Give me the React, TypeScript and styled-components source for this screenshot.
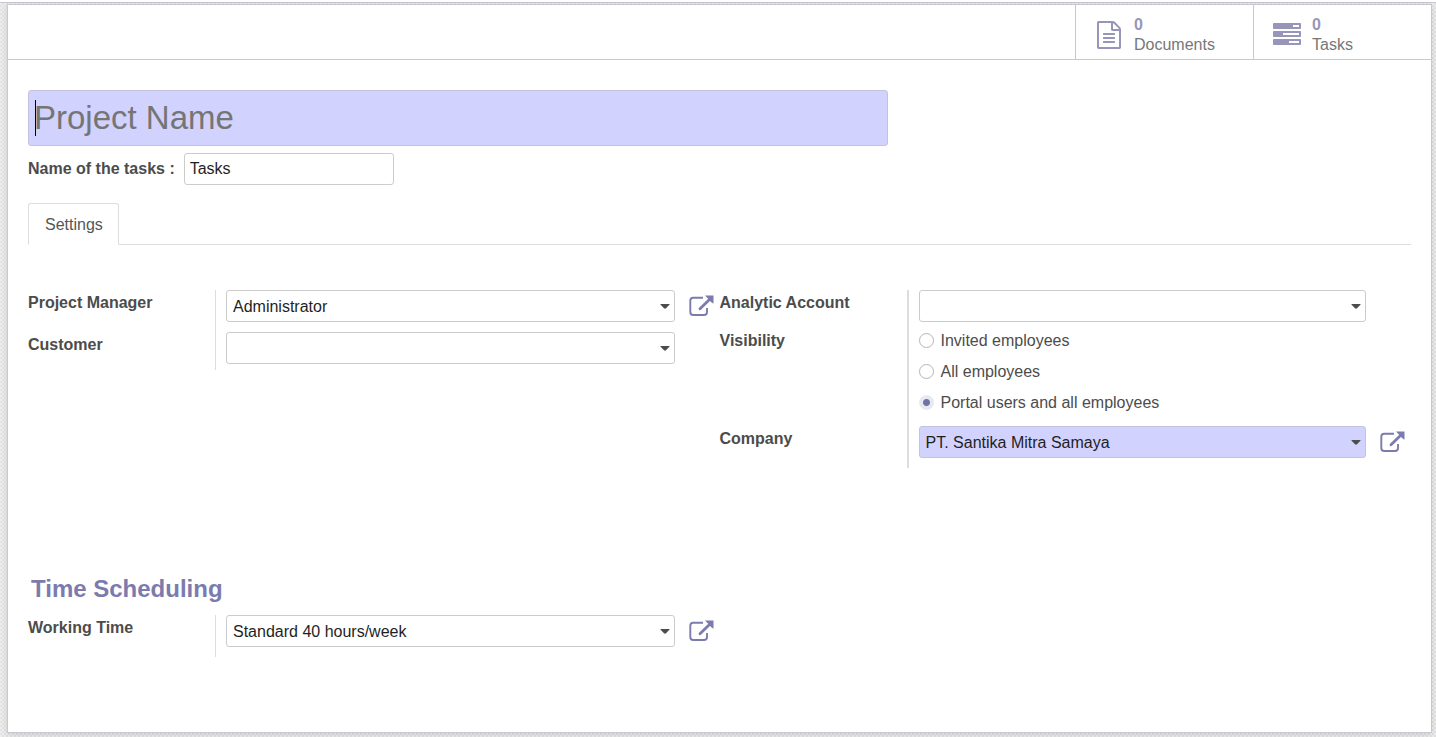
import React, { useId, useState } from 'react';
import styled, { createGlobalStyle } from 'styled-components';

const GlobalStyle = createGlobalStyle`
  *, *::before, *::after { box-sizing: border-box; }
  body {
    margin: 0;
    background: #fff;
    color: #4c4c4c;
    font: 16px/26px "Liberation Sans", Arial, sans-serif;
  }
`;

const Page = styled.main`
  display: flex;
  min-height: calc(100vh - 2px);
  margin-top: 2px;
  padding: 1px 4px 4px 7px;
  border-top: 1px solid #c8c8d3;
  background: repeating-conic-gradient(#e2e2e2 0 25%, #eeeeee 0 50%) 0 0 / 4px 4px;
`;

const Sheet = styled.form`
  flex: 1;
  min-width: 0;
  border: 1px solid #c8c8d3;
  background: #fff;
  box-shadow: 0 2px 6px rgba(0, 0, 0, 0.12);
`;

const StatBar = styled.header`
  display: flex;
  justify-content: flex-end;
  height: 55px;
  border-bottom: 1px solid #c8c8d3;
`;

const StatButton = styled.button`
  display: flex;
  align-items: center;
  gap: 11px;
  width: 178px;
  padding: 5px 0 0 19px;
  border: 0;
  border-left: 1px solid #c8c8d3;
  background: #fff;
  color: #777;
  font: inherit;
  line-height: 20px;
  text-align: left;
  cursor: pointer;
`;

const StatText = styled.span`
  display: flex;
  flex-direction: column;
`;

const StatValue = styled.strong`
  color: #9796ba;
`;

const StatSvg = styled.svg`
  width: 28px;
  height: 28px;
  fill: #9796ba;
`;

const Content = styled.div`
  padding: 30px 20px 75px;
`;

const TitleBox = styled.div`
  position: relative;
  max-width: 860px;
`;

const TextCursor = styled.span`
  position: absolute;
  top: 10px;
  left: 7px;
  width: 1px;
  height: 36px;
  background: #000;
`;

const TextInput = styled.input`
  width: 210px;
  height: 32px;
  padding: 0 5px;
  border: 1px solid #ccc;
  border-radius: 3px;
  background: #fff;
  color: #1f1f1f;
  font: inherit;
`;

const TitleInput = styled(TextInput)`
  display: block;
  width: 100%;
  height: 56px;
  border-color: #c3c3dd;
  background: #d2d2ff;
  font-size: 33px;

  &::placeholder { color: #757575; opacity: 1; }
`;

const TaskNameRow = styled.div`
  display: flex;
  align-items: center;
  gap: 9px;
  margin-top: 7px;
`;

const Label = styled.label`
  font-weight: bold;
`;

const TabList = styled.div`
  display: flex;
  margin-top: 18px;
  border-bottom: 1px solid #ddd;
`;

const Tab = styled.button`
  height: 42px;
  margin-bottom: -1px;
  padding: 2px 15px 0 16px;
  border: 1px solid #ddd;
  border-bottom-color: #fff;
  border-radius: 3px 3px 0 0;
  background: #fff;
  color: #555;
  font: inherit;
`;

const Columns = styled.div`
  display: grid;
  grid-template-columns: 1fr 1fr;
  align-items: start;
`;

const SettingsColumns = styled(Columns)`
  margin-top: 45px;
`;

const Row = styled.div<{ $space: number; $line: number }>`
  display: grid;
  grid-template-columns: 187px 1fr;

  & > :last-child {
    padding: 0 6px ${(p) => p.$space}px 10px;
    border-left: ${(p) => p.$line}px solid #ddd;
  }
`;

const Cell = styled.div`
  display: grid;
  grid-template-columns: 1fr 25px;
  align-items: center;
  gap: 14px;
`;

const SelectBox = styled.div`
  display: grid;
  align-items: center;

  & > * { grid-area: 1 / 1; }
`;

const Select = styled.select<{ $required?: boolean }>`
  appearance: none;
  width: 100%;
  height: 32px;
  padding: 2px 24px 0 6px;
  border: 1px solid ${(p) => (p.$required ? '#c3c3dd' : '#ccc')};
  border-radius: 3px;
  background: ${(p) => (p.$required ? '#d2d2ff' : '#fff')};
  color: #1f1f1f;
  font: inherit;
`;

const Caret = styled.svg`
  justify-self: end;
  width: 10px;
  height: 5px;
  margin-right: 5px;
  fill: #4c4c4c;
  pointer-events: none;
`;

const LinkButton = styled.button`
  width: 25px;
  height: 22px;
  padding: 0;
  border: 0;
  background: none;
  color: #7c7bad;
  cursor: pointer;

  svg { display: block; }
`;

const Choices = styled.div`
  display: flex;
  flex-direction: column;
  gap: 5px;
`;

const Choice = styled.label`
  display: flex;
  align-items: center;
  gap: 7px;
`;

const Radio = styled.input`
  appearance: none;
  width: 15px;
  height: 15px;
  margin: 0 0 2px;
  border: 1px solid #b4b4bc;
  border-radius: 50%;
  background: #fff;

  &:checked {
    border-color: #e8e8f2;
    background: radial-gradient(circle, #7073a3 0 3px, #e8e8f2 4px);
  }
`;

const GroupTitle = styled.h2`
  margin: 106px 0 11px 3px;
  color: #7c7bad;
  font-size: 24px;
  line-height: 30px;
`;

function ExternalLink({ title }: { title: string }) {
  return (
    <LinkButton type="button" aria-label={title}>
      <svg width="25" height="22" viewBox="0 0 25 22" fill="none">
        <path
          d="M14 2.7H4.2Q1.3 2.7 1.3 5.6V17Q1.3 20 4.2 20H15Q18 20 18 17V13"
          stroke="currentColor"
          strokeWidth="1.9"
        />
        <path d="M11 13.8L20.5 4.5" stroke="currentColor" strokeWidth="2.8" strokeLinecap="round" />
        <path d="M16 .5H24.5V8.8L22 6.9L18.2 2.8Z" fill="currentColor" />
      </svg>
    </LinkButton>
  );
}

type SelectFieldProps = {
  label: string;
  options: string[];
  space: number;
  line?: number;
  required?: boolean;
  link?: boolean;
};

function SelectField({ label, options, space, line = 1, required, link }: SelectFieldProps) {
  const id = useId();
  return (
    <Row $space={space} $line={line}>
      <Label htmlFor={id}>{label}</Label>
      <Cell>
        <SelectBox>
          <Select id={id} $required={required} defaultValue={options[0]}>
            {options.map((option) => (
              <option key={option}>{option}</option>
            ))}
          </Select>
          <Caret viewBox="0 0 10 5" aria-hidden="true">
            <path d="M1 0H9Q10 0 9.4 .8L6 4.3Q5 5.2 4 4.3L.6 .8Q0 0 1 0Z" />
          </Caret>
        </SelectBox>
        {link && <ExternalLink title={`Open ${label}`} />}
      </Cell>
    </Row>
  );
}

const visibilities = ['Invited employees', 'All employees', 'Portal users and all employees'];

export default function App() {
  const [visibility, setVisibility] = useState(visibilities[2]);

  return (
    <>
      <GlobalStyle />
      <Page>
        <Sheet>
          <StatBar>
            <StatButton type="button">
              <StatSvg viewBox="0 0 1792 1792" aria-hidden="true">
                <path d="M1596 380q28 28 48 76t20 88v1152q0 40-28 68t-68 28h-1344q-40 0-68-28t-28-68v-1600q0-40 28-68t68-28h896q40 0 88 20t76 48zm-444-244v376h376q-10-29-22-41l-313-313q-12-12-41-22zm384 1528v-1024h-416q-40 0-68-28t-28-68v-416h-768v1536h1280zm-1024-864q0-14 9-23t23-9h704q14 0 23 9t9 23v64q0 14-9 23t-23 9h-704q-14 0-23-9t-9-23v-64zm736 224q14 0 23 9t9 23v64q0 14-9 23t-23 9h-704q-14 0-23-9t-9-23v-64q0-14 9-23t23-9h704zm0 256q14 0 23 9t9 23v64q0 14-9 23t-23 9h-704q-14 0-23-9t-9-23v-64q0-14 9-23t23-9h704z" />
              </StatSvg>
              <StatText>
                <StatValue>0</StatValue>
                <span>Documents</span>
              </StatText>
            </StatButton>
            <StatButton type="button">
              <StatSvg viewBox="0 0 1792 1792" aria-hidden="true">
                <path d="M1024 1408h640v-128h-640v128zm-384-512h1024v-128h-1024v128zm640-512h384v-128h-384v128zm512 832v256q0 26-19 45t-45 19h-1664q-26 0-45-19t-19-45v-256q0-26 19-45t45-19h1664q26 0 45 19t19 45zm0-512v256q0 26-19 45t-45 19h-1664q-26 0-45-19t-19-45v-256q0-26 19-45t45-19h1664q26 0 45 19t19 45zm0-512v256q0 26-19 45t-45 19h-1664q-26 0-45-19t-19-45v-256q0-26 19-45t45-19h1664q26 0 45 19t19 45z" />
              </StatSvg>
              <StatText>
                <StatValue>0</StatValue>
                <span>Tasks</span>
              </StatText>
            </StatButton>
          </StatBar>

          <Content>
            <TitleBox>
              <TitleInput type="text" placeholder="Project Name" aria-label="Project Name" />
              <TextCursor />
            </TitleBox>
            <TaskNameRow>
              <Label htmlFor="task-name">Name of the tasks :</Label>
              <TextInput id="task-name" type="text" defaultValue="Tasks" />
            </TaskNameRow>

            <TabList role="tablist">
              <Tab type="button" role="tab" aria-selected="true">Settings</Tab>
            </TabList>

            <SettingsColumns>
              <div>
                <SelectField label="Project Manager" options={['Administrator']} space={10} link />
                <SelectField label="Customer" options={['']} space={6} />
              </div>
              <div>
                <SelectField label="Analytic Account" options={['']} space={6} line={2} />
                <Row $space={10} $line={2}>
                  <Label as="span" id="visibility-label">Visibility</Label>
                  <Choices role="radiogroup" aria-labelledby="visibility-label">
                    {visibilities.map((item) => (
                      <Choice key={item}>
                        <Radio
                          type="radio"
                          name="visibility"
                          checked={visibility === item}
                          onChange={() => setVisibility(item)}
                        />
                        {item}
                      </Choice>
                    ))}
                  </Choices>
                </Row>
                <SelectField
                  label="Company"
                  options={['PT. Santika Mitra Samaya']}
                  space={10}
                  line={2}
                  required
                  link
                />
              </div>
            </SettingsColumns>

            <GroupTitle>Time Scheduling</GroupTitle>
            <Columns>
              <SelectField label="Working Time" options={['Standard 40 hours/week']} space={10} link />
            </Columns>
          </Content>
        </Sheet>
      </Page>
    </>
  );
}
